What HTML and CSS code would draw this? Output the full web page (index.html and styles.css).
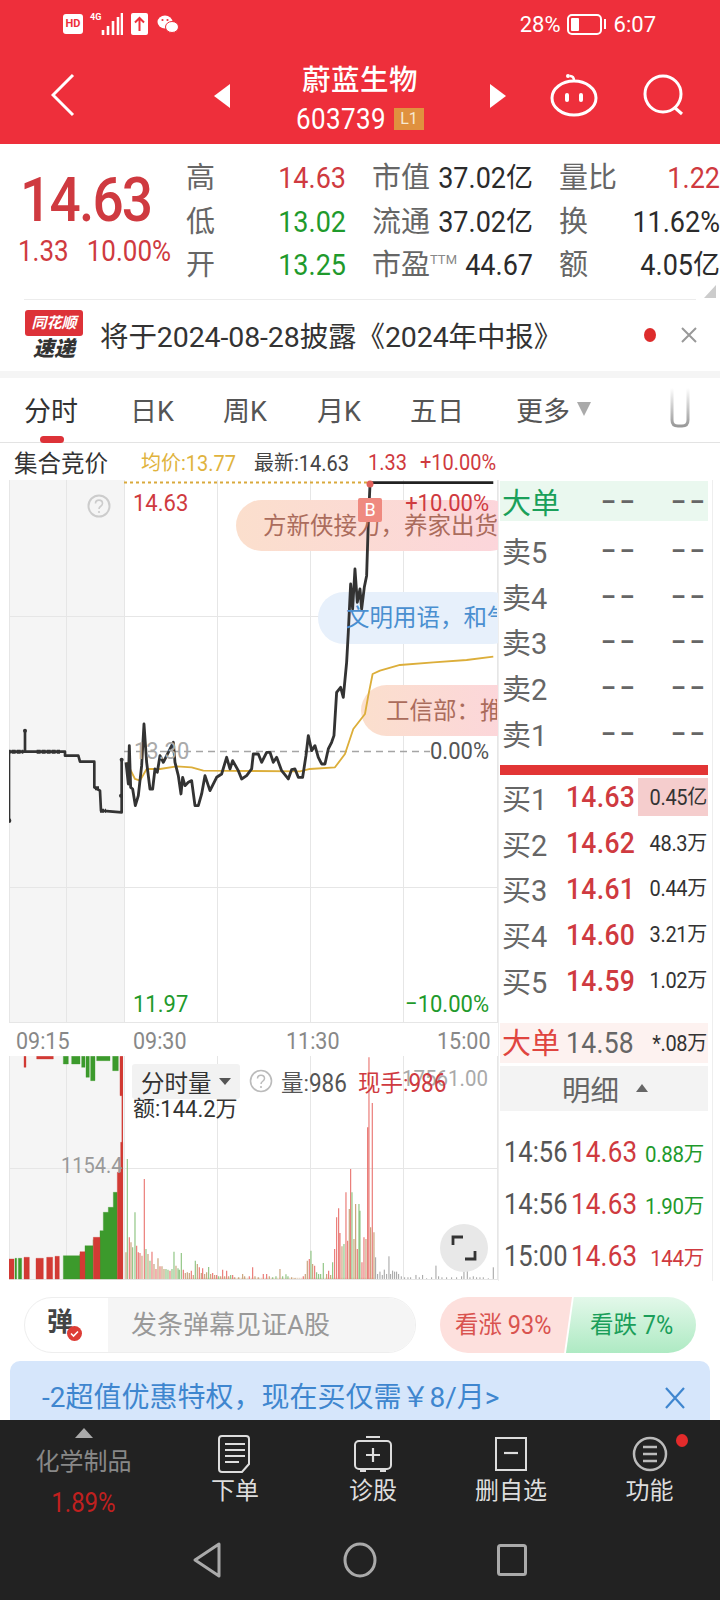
FILE: index.html
```html
<!DOCTYPE html>
<html lang="zh">
<head>
<meta charset="utf-8">
<title>蔚蓝生物</title>
<link rel="stylesheet" href="styles.css">
</head>
<body>
<div class="app">
  <header class="head">
    <div class="status">
      <span class="hd">HD</span>
      <span class="net">4G</span>
      <svg class="sig" width="22" height="24" viewBox="0 0 22 24"><path d="M2 23v-5M7 23v-9M12 23v-14M17 23v-18M21 23v-22" stroke="#fff" stroke-width="2.6" fill="none"/></svg>
      <svg class="up" width="17" height="22" viewBox="0 0 17 22"><rect width="17" height="22" rx="2" fill="#fff"/><path d="M8.500 18V5M4 9.500l4.500-4.500 4.500 4.500" stroke="#ee2f3b" stroke-width="2" fill="none"/></svg>
      <svg class="wx" width="22" height="20" viewBox="0 0 22 20"><ellipse cx="8" cy="8" rx="7.500" ry="6.500" fill="#fff"/><ellipse cx="15" cy="13" rx="6.500" ry="5.500" fill="#fff" stroke="#ee2f3b"/><circle cx="5.500" cy="6" r="1.100" fill="#ee2f3b"/><circle cx="10.500" cy="6" r="1.100" fill="#ee2f3b"/></svg>
      <span class="st-right">28%</span>
      <span class="batt"><i class="batt-fill"></i></span>
      <i class="batt-nib"></i>
      <span class="clock">6:07</span>
    </div>
    <div class="nav">
      <svg class="back" width="24" height="44" viewBox="0 0 24 44"><path d="M22 2 2 22l20 20" stroke="#fff" stroke-width="3" fill="none"/></svg>
      <i class="tri-left"></i>
      <div class="title">
        <div class="name">蔚蓝生物</div>
        <div class="code"><span class="n">603739</span><span class="lv">L1</span></div>
      </div>
      <i class="tri-right"></i>
      <svg class="robot" width="48" height="44" viewBox="0 0 48 44"><ellipse cx="24" cy="25" rx="22" ry="17" fill="none" stroke="#fff" stroke-width="3"/><path d="M24 8c0-3-1-5-4-5" fill="none" stroke="#fff" stroke-width="2.500"/><circle cx="18" cy="3" r="2" fill="#fff"/><rect x="15" y="20" width="4" height="9" rx="2" fill="#fff"/><rect x="29" y="20" width="4" height="9" rx="2" fill="#fff"/></svg>
      <svg class="search" width="42" height="42" viewBox="0 0 42 42"><circle cx="20" cy="20" r="18" fill="none" stroke="#fff" stroke-width="3"/><path d="M31 33l8 7" stroke="#fff" stroke-width="3"/></svg>
    </div>
  </header>

  <section class="quote">
    <div class="big">
      <div class="big-price"><span class="n">14.63</span></div>
      <div class="big-change"><span class="n">1.33</span><span class="n">10.00%</span></div>
    </div>
    <div class="stats">
      <div class="cell"><span class="lab">高</span><span class="n up-c">14.63</span></div>
      <div class="cell"><span class="lab">市值</span><span class="val"><span class="n">37.02</span>亿</span></div>
      <div class="cell"><span class="lab">量比</span><span class="n up-c">1.22</span></div>
      <div class="cell"><span class="lab">低</span><span class="n dn-c">13.02</span></div>
      <div class="cell"><span class="lab">流通</span><span class="val"><span class="n">37.02</span>亿</span></div>
      <div class="cell"><span class="lab">换</span><span class="val"><span class="n">11.62%</span></span></div>
      <div class="cell"><span class="lab">开</span><span class="n dn-c">13.25</span></div>
      <div class="cell"><span class="lab">市盈<sup class="ttm">TTM</sup></span><span class="val"><span class="n">44.67</span></span></div>
      <div class="cell"><span class="lab">额</span><span class="val"><span class="n">4.05</span>亿</span></div>
    </div>
    <i class="corner"></i>
  </section>

  <section class="news">
    <div class="logo"><span class="logo-flag">同花顺</span><span class="logo-sub">速递</span></div>
    <div class="news-text">将于2024-08-28披露《2024年中报》</div>
    <i class="news-dot"></i>
    <svg class="news-x" width="18" height="18" viewBox="0 0 18 18"><path d="M2 2l14 14M16 2 2 16" stroke="#999" stroke-width="2"/></svg>
  </section>

  <nav class="tabs">
    <span class="tab tab-on">分时</span>
    <span class="tab tab-2">日K</span>
    <span class="tab tab-3">周K</span>
    <span class="tab tab-4">月K</span>
    <span class="tab tab-5">五日</span>
    <span class="tab tab-6">更多</span>
    <i class="tab-tri"></i>
    <svg class="tab-u" width="22" height="40" viewBox="0 0 22 40"><defs><linearGradient id="u" x1="0" y1="0" x2="0" y2="1"><stop offset="0" stop-color="#fff"/><stop offset="1" stop-color="#999"/></linearGradient></defs><path d="M3 0v32q0 6 6 6h4q6 0 6-6V0" fill="none" stroke="url(#u)" stroke-width="3"/></svg>
  </nav>

  <div class="info">
    <span class="info-a">集合竞价</span>
    <span class="info-b">均价:<span class="n">13.77</span></span>
    <span class="info-c">最新:<span class="n">14.63</span></span>
    <span class="info-d n">1.33</span>
    <span class="info-e n">+10.00%</span>
  </div>

  <section class="market">
    <div class="charts">
      <div class="price-chart">
        <svg class="plot" width="489" height="543" viewBox="9 481 489 543">
          <rect x="9" y="481" width="115" height="543" fill="#f5f5f5"/>
          <path d="M9.500 481V1024M66.500 481V1024M124.500 481V1024M217.500 481V1024M310.500 481V1024M403.500 481V1024M497.500 481V1024M9 617.500H498M9 888.500H498M9 1023.500H498" stroke="#e6e6e6" stroke-width="1" fill="none"/>
          <rect x="236" y="501" width="280" height="51" rx="25.500" fill="url(#b1)"/>
          <rect x="318" y="593" width="200" height="52" rx="26" fill="#e7f0fb"/>
          <rect x="361" y="686" width="160" height="51" rx="25.500" fill="url(#b1)"/>
          <defs><linearGradient id="b1"><stop offset="0" stop-color="#fbdfcd"/><stop offset="1" stop-color="#fcd5dc"/></linearGradient></defs>
          <path d="M124 752.500H430" stroke="#a5a5a5" stroke-width="1.500" stroke-dasharray="7 5"/>
          <path d="M124 483.500H370" stroke="#d9a93c" stroke-width="1.800" stroke-dasharray="3 3"/>
          <g transform="translate(0 480) scale(.3333)" fill="none" stroke-linejoin="round">
            <path d="M380 850 405 900 420 905 440 870 480 870 530 862 575 865 610 875 900 877 930 870 1005 865 1035 825 1060 750 1095 705 1105 650 1118 585 1140 575 1200 558 1300 550 1400 543 1480 533" stroke="#dcae3a" stroke-width="5.500"/>
            <path d="M27 1025V818H75V755 818H195V830H235L240 848H283V925L300 935 303 995 365 1000V840" stroke="#333" stroke-width="8"/>
            <path d="M20 818H70M110 818H180M285 928H300M300 995H318" stroke="#333" stroke-width="12" stroke-dasharray="12 3"/>
            <circle cx="27" cy="1025" r="7" fill="#333"/>
            <circle cx="75" cy="755" r="6" fill="#333"/>
            <circle cx="365" cy="842" r="6" fill="#333"/>
            <circle cx="363" cy="950" r="6" fill="#333"/>
            <path d="M378 850 385 915 388 800 392 925 398 930 406 980 415 950 425 860 432 735 440 850 450 930 458 930 465 870 472 880 480 830 490 850 505 820 520 790 525 850 535 890 543 945 548 895 555 920 565 910 575 905 585 980 595 980 605 945 615 890 630 935 650 895 665 885 680 835 690 870 698 845 715 875 725 900 740 890 755 870 760 825 775 825 785 850 800 820 810 820 820 850 830 835 845 875 865 900 875 872 885 870 895 895 908 895 918 830 925 770 935 815 945 800 955 835 965 855 975 855 985 810 995 790 1002 770 1010 640 1022 625 1030 655 1040 550 1045 460 1052 315 1058 390 1065 270 1072 370 1080 330 1085 390 1093 325 1100 290 1105 130 1110 20" stroke="#333" stroke-width="8.500"/>
            <path d="M1110 11H1480" stroke="#222" stroke-width="8"/>
          </g>
          <circle cx="370" cy="485" r="3.500" fill="#e0605a"/>
        </svg>
        <svg class="q-main" width="24" height="24" viewBox="0 0 24 24"><circle cx="12" cy="12" r="10.500" fill="none" stroke="#ccc" stroke-width="2"/><path d="M8.500 9.500c0-4.500 7-4.500 7 0 0 3-3.500 2.500-3.500 5.500" fill="none" stroke="#ccc" stroke-width="1.600"/><circle cx="12" cy="18" r="1.100" fill="#ccc"/></svg>
        <span class="cl cl-tl n up-c">14.63</span>
        <span class="cl cl-tr n up-c">+10.00%</span>
        <span class="cl cl-bl n dn-c">11.97</span>
        <span class="cl cl-br n dn-c">−10.00%</span>
        <span class="cl cl-ml n">13.30</span>
        <span class="cl cl-mr n">0.00%</span>
        <div class="bub bub-1">方新侠接力，养家出货</div>
        <div class="bub bub-2">文明用语，和气</div>
        <div class="bub bub-3">工信部：推</div>
        <span class="mark">B</span>
      </div>
      <div class="times">
        <span class="n t1">09:15</span><span class="n t2">09:30</span><span class="n t3">11:30</span><span class="n t4">15:00</span>
      </div>
      <div class="vol-chart">
        <svg class="plot" width="489" height="224" viewBox="9 1057 489 224">
          <rect x="9" y="1057" width="115" height="224" fill="#f5f5f5"/>
          <path d="M9.500 1057V1281M66.500 1057V1281M124.500 1057V1281M217.500 1057V1281M310.500 1057V1281M403.500 1057V1281M497.500 1057V1281M9 1169.500H498M9 1056.500H498M9 1280.500H498" stroke="#e6e6e6" stroke-width="1" fill="none"/>
          <g transform="translate(0 1030) scale(.3333)" fill="none">
            <path stroke="#3c9a2c" stroke-width="1" fill="#3c9a2c" d="M45 750V688H50V750ZM55 750V688H65V750ZM190 750V680H240V675 750ZM255 750V650H280V632 750ZM300 750V605H310V550H325V535H340V490H352V750ZM190 82H205V105H190ZM215 82H240V105H215ZM245 82H255V115H245ZM258 82H268V145H258ZM272 82H285V155H272ZM290 82H330V95H290ZM338 82H355V125H338Z"/>
            <path stroke="#d23a34" stroke-width="1" fill="#d23a34" d="M27 750V690H42V750ZM72 750V685H88V750ZM108 750V688H130V750ZM140 750V685H158V750ZM165 750V682H178V750ZM240 750V668H255V750ZM280 750V625H300V750ZM352 750V430H362V340H368V750ZM360 82H367V200H360ZM72 82H78V115H72ZM110 82H160V90H110Z"/>
            <path d="M367 82V750" stroke="#d23a34" stroke-width="4"/>
            <g stroke-width="3.500">
              <path stroke="#c9a27a" stroke-width="2.500" stroke-dasharray="3 3" d="M560 748H1125"/>
              <path stroke="#ea7a76" d="M388 750V625M410 750V650M415 750V670M420 750V672M433 750V450M456 750V668M468 750V720M480 750V712M510 750V725M550 750V722M574 750V725M598 750V715M608 750V718M638 750V732M650 750V738M668 750V722M680 750V725M698 750V738M748 750V742M758 750V715M790 750V735M800 750V735M910 750V742M928 750V690M944 750V710M986 750V725M1004 750V660M1010 750V565M1016 750V538M1020 750V612M1038 750V490M1043 750V635M1052 750V420M1072 750V660M1086 750V700M1092 750V625M1103 750V295M1107 750V85M1117 750V222"/>
              <path stroke="#8fc583" d="M382 750V390M398 750V655M405 750V550M438 750V660M450 750V695M498 750V720M504 750V722M516 750V720M522 750V668M534 750V718M538 750V722M544 750V672M586 750V695M626 750V714M656 750V742M692 750V738M818 750V745M828 750V742M848 750V742M858 750V736M864 750V742M933 750V665M950 750V730M956 750V735M962 750V735M970 750V702M998 750V700M1032 750V645M1056 750V490M1077 750V525M1080 750V545"/>
              <path stroke="#c9a27a" d="M378 750V670M393 750V640M426 750V680M444 750V675M462 750V705M474 750V688M486 750V712M492 750V720M528 750V710M556 750V732M562 750V730M568 750V732M580 750V738M592 750V705M604 750V732M614 750V735M620 750V730M632 750V735M644 750V738M662 750V742M674 750V742M686 750V742M704 750V745M716 750V745M728 750V735M734 750V742M765 750V742M775 750V745M808 750V742M840 750V720M875 750V745M885 750V748M916 750V735M922 750V695M938 750V705M980 750V735M992 750V738M1026 750V652M1048 750V540M1062 750V630M1067 750V525M1098 750V630M1112 750V595M1122 750V610"/>
              <path stroke="#8d8d8d" stroke-width="2.500" d="M1127 750V685M1133 750V735M1140 750V728M1147 750V738M1153 750V722M1160 750V735M1167 750V682M1172 750V735M1178 750V725M1184 750V728M1190 750V728M1196 750V735M1204 750V742M1214 750V745M1224 750V745M1232 750V745M1248 750V738M1258 750V745M1268 750V738M1280 750V748M1295 750V745M1308 750V710M1316 750V742M1326 750V745M1340 750V745M1355 750V745M1370 750V745M1385 750V742M1392 750V725M1402 750V720M1410 750V745M1420 750V742M1430 750V745M1440 750V745M1450 750V745M1465 750V748M1480 750V715"/>
            </g>
          </g>
        </svg>
        <span class="vl vl-r n">17561.00</span>
        <span class="vl vl-max n">1154.4</span>
        <div class="vsel"><span>分时量</span><i class="vsel-tri"></i></div>
        <svg class="q-vol" width="24" height="24" viewBox="0 0 24 24"><circle cx="12" cy="12" r="10.500" fill="none" stroke="#bbb" stroke-width="1.600"/><path d="M8.500 9.500c0-4.500 7-4.500 7 0 0 3-3.500 2.500-3.500 5.500" fill="none" stroke="#bbb" stroke-width="1.500"/><circle cx="12" cy="18" r="1.100" fill="#bbb"/></svg>
        <span class="vl vl-q">量:<span class="n">986</span></span>
        <span class="vl vl-x">现手:<span class="n">986</span></span>
        <span class="vl vl-a">额:<span class="n">144.2</span>万</span>
        <div class="full"><svg width="26" height="26" viewBox="0 0 26 26"><path d="M12 2H2v8M14 24h10v-8" fill="none" stroke="#333" stroke-width="2.800"/></svg></div>
      </div>
    </div>

    <aside class="panel">
      <div class="row row-big-g"><span class="r-lab">大单</span><span class="dash">--</span><span class="dash">--</span></div>
      <div class="sells">
        <div class="row"><span class="r-lab">卖5</span><span class="dash">--</span><span class="dash">--</span></div>
        <div class="row"><span class="r-lab">卖4</span><span class="dash">--</span><span class="dash">--</span></div>
        <div class="row"><span class="r-lab">卖3</span><span class="dash">--</span><span class="dash">--</span></div>
        <div class="row"><span class="r-lab">卖2</span><span class="dash">--</span><span class="dash">--</span></div>
        <div class="row"><span class="r-lab">卖1</span><span class="dash">--</span><span class="dash">--</span></div>
      </div>
      <div class="bar"></div>
      <div class="buys">
        <div class="row"><span class="r-lab">买1</span><span class="r-price n">14.63</span><span class="r-qty r-hi"><span class="n">0.45</span>亿</span></div>
        <div class="row"><span class="r-lab">买2</span><span class="r-price n">14.62</span><span class="r-qty"><span class="n">48.3</span>万</span></div>
        <div class="row"><span class="r-lab">买3</span><span class="r-price n">14.61</span><span class="r-qty"><span class="n">0.44</span>万</span></div>
        <div class="row"><span class="r-lab">买4</span><span class="r-price n">14.60</span><span class="r-qty"><span class="n">3.21</span>万</span></div>
        <div class="row"><span class="r-lab">买5</span><span class="r-price n">14.59</span><span class="r-qty"><span class="n">1.02</span>万</span></div>
      </div>
      <div class="row row-big-r"><span class="r-lab">大单</span><span class="r-price r-gray n">14.58</span><span class="r-qty"><span class="n">*.08</span>万</span></div>
      <div class="detail-h"><span>明细</span><i class="detail-tri"></i></div>
      <div class="details">
        <div class="row"><span class="d-time n">14:56</span><span class="d-price n">14.63</span><span class="d-qty dn-c"><span class="n">0.88</span>万</span></div>
        <div class="row"><span class="d-time n">14:56</span><span class="d-price n">14.63</span><span class="d-qty dn-c"><span class="n">1.90</span>万</span></div>
        <div class="row"><span class="d-time n">15:00</span><span class="d-price n">14.63</span><span class="d-qty up-c"><span class="n">144</span>万</span></div>
      </div>
    </aside>
  </section>

  <section class="compose">
    <div class="pill">
      <div class="pill-l"><span class="dan">弹</span><svg class="check" width="15" height="15" viewBox="0 0 15 15"><circle cx="7.500" cy="7.500" r="7.500" fill="#dd3d36"/><path d="M4 7.500l2.500 2.500 4.500-4.500" fill="none" stroke="#fff" stroke-width="1.600"/></svg></div>
      <div class="pill-r">发条弹幕见证A股</div>
    </div>
    <div class="votes">
      <div class="vote-up">看涨 <span class="n">93%</span></div>
      <div class="vote-dn">看跌 <span class="n">7%</span></div>
    </div>
  </section>

  <section class="banner">
    <span class="banner-text">-2超值优惠特权，现在买仅需￥8/月&gt;</span>
    <svg class="banner-x" width="22" height="22" viewBox="0 0 22 22"><path d="M2 1l18 20M20 1 2 21" stroke="#3f86cf" stroke-width="2.200"/></svg>
  </section>

  <footer class="foot">
    <div class="tools">
      <div class="tool tool-sector">
        <i class="sector-tri"></i>
        <span class="sector-name">化学制品</span>
        <span class="sector-pct n">1.89%</span>
      </div>
      <div class="tool">
        <svg class="ticon" width="38" height="38" viewBox="0 0 38 38"><path d="M6 1h24q3 0 3 3v25l-7 8H6q-3 0-3-3V4q0-3 3-3Z" fill="none" stroke="#ddd" stroke-width="2"/><path d="M9 9h20M9 15h20M9 21h20M9 27h14" stroke="#ddd" stroke-width="2"/></svg>
        <span>下单</span>
      </div>
      <div class="tool">
        <svg class="ticon" width="40" height="38" viewBox="0 0 40 38"><rect x="2" y="6" width="36" height="28" rx="4" fill="none" stroke="#ddd" stroke-width="2"/><path d="M13 2h14M7 36h6M27 36h6M20 13v14M13 20h14" stroke="#ddd" stroke-width="2.200"/></svg>
        <span>诊股</span>
      </div>
      <div class="tool">
        <svg class="ticon" width="34" height="38" viewBox="0 0 34 38"><rect x="2" y="3" width="30" height="32" fill="none" stroke="#ddd" stroke-width="2"/><path d="M10 18h14" stroke="#ddd" stroke-width="2.200"/></svg>
        <span>删自选</span>
      </div>
      <div class="tool">
        <svg class="ticon" width="36" height="38" viewBox="0 0 36 38"><circle cx="18" cy="19" r="16" fill="none" stroke="#bbb" stroke-width="2.500"/><path d="M11 12h14M11 19h14M11 26h14" stroke="#bbb" stroke-width="2.500"/></svg>
        <i class="tool-dot"></i>
        <span>功能</span>
      </div>
    </div>
    <div class="sysnav">
      <svg width="30" height="36" viewBox="0 0 30 36"><path d="M27 2v32L3 18Z" fill="none" stroke="#aaa" stroke-width="3" stroke-linejoin="round"/></svg>
      <svg width="34" height="36" viewBox="0 0 34 36"><ellipse cx="17" cy="18" rx="15" ry="16" fill="none" stroke="#aaa" stroke-width="3"/></svg>
      <svg width="30" height="32" viewBox="0 0 30 32"><rect x="1.500" y="1.500" width="27" height="29" rx="2" fill="none" stroke="#aaa" stroke-width="3"/></svg>
    </div>
  </footer>
</div>
</body>
</html>
```
FILE: styles.css
```css
* { box-sizing: border-box; }
html, body { margin: 0; padding: 0; background: #fff; }
body { font-family: Roboto, "Noto Sans CJK SC", "Noto Sans", sans-serif; color: #333; }
i { display: block; font-style: normal; }
.app { width: 720px; height: 1600px; overflow: hidden; display: flex; flex-direction: column; position: relative; }
.n { display: inline-block; transform: scaleY(1.12); }
.up-c { color: #cf3a40; }
.dn-c { color: #1f9a2c; }

/* header */
.head { height: 144px; background: #ee2f3b; color: #fff; flex: none; }
.status { height: 48px; display: flex; align-items: center; padding-left: 63px; }
.hd { width: 20px; height: 20px; background: #fff; color: #ee2f3b; border-radius: 3px; font-size: 11px; font-weight: 700; text-align: center; line-height: 20px; }
.net { font-size: 9px; font-weight: 700; width: 14px; margin-left: 7px; align-self: flex-start; margin-top: 12px; }
.sig { margin-left: -3px; }
.up { margin-left: 8px; }
.wx { margin-left: 9px; }
.st-right { margin-left: auto; font-size: 22px; }
.batt { width: 35px; height: 21px; border: 2px solid #fff; border-radius: 5px; margin-left: 6px; padding: 2px; display: block; }
.batt-fill { width: 8px; height: 100%; background: #fff; border-radius: 1px; }
.batt-nib { width: 2px; height: 10px; background: #fff; margin-left: 2px; }
.clock { font-size: 22px; margin-left: 8px; margin-right: 64px; }
.nav { height: 96px; position: relative; display: flex; align-items: center; }
.back { position: absolute; left: 51px; top: 25px; }
.tri-left, .tri-right { position: absolute; top: 36px; width: 0; height: 0; border-top: 12px solid transparent; border-bottom: 12px solid transparent; }
.tri-left { left: 214px; border-right: 16px solid #fff; }
.tri-right { left: 490px; border-left: 16px solid #fff; }
.title { width: 100%; text-align: center; margin-top: 4px; }
.name { font-size: 28.500px; font-weight: 500; line-height: 38px; letter-spacing: .5px; }
.code { display: flex; justify-content: center; align-items: center; gap: 8px; font-size: 26px; line-height: 30px; margin-top: 4px; letter-spacing: .4px; }
.lv { width: 30px; height: 22px; background: #e0913f; color: #f7e9d2; font-size: 16px; line-height: 22px; letter-spacing: 0; text-align: center; }
.robot { position: absolute; left: 550px; top: 25px; }
.search { position: absolute; left: 643px; top: 26px; }

/* quote */
.quote { height: 155px; flex: none; display: flex; position: relative; }
.big { width: 187px; padding-left: 18px; color: #cf3a40; }
.big-price { font-size: 55px; font-weight: 500; line-height: 50px; margin-top: 31px; padding-left: 2px; letter-spacing: -1.800px; }
.big-change { font-size: 26px; line-height: 30px; margin-top: 11px; display: flex; gap: 18px; letter-spacing: 0; }
.stats { width: 534px; padding-top: 13px; display: grid; grid-template-columns: 160px 161px 161px; column-gap: 26px; grid-auto-rows: 43.500px; align-items: center; font-size: 27px; color: #222; }
.cell { display: flex; justify-content: space-between; align-items: center; line-height: 43px; white-space: nowrap; }
.lab { color: #666; font-size: 29px; }
.val { color: #2b2b2b; }
.ttm { font-size: 13px; line-height: 0; vertical-align: 11px; color: #888; }
.corner { position: absolute; right: 4px; top: 141px; width: 0; height: 0; border-left: 12px solid transparent; border-bottom: 13px solid #ccc; }

/* news */
.news { height: 72px; flex: none; margin: 0 24px; border-top: 1px solid #ececec; display: flex; align-items: center; position: relative; }
.logo { width: 60px; height: 52px; display: flex; flex-direction: column; align-items: center; }
.logo-flag { width: 58px; height: 26px; background: #dd3238; color: #fff; font-size: 15px; font-weight: 700; font-style: italic; line-height: 26px; text-align: center; border-radius: 3px; }
.logo-sub { font-size: 21px; font-weight: 900; font-style: italic; line-height: 26px; color: #333; }
.news-text { margin-left: 16px; font-size: 28.500px; letter-spacing: -.1px; color: #333; margin-top: -3px; white-space: nowrap; }
.news-dot { position: absolute; left: 620px; top: 28px; width: 12px; height: 14px; border-radius: 50%; background: #dd2c2c; }
.news-x { position: absolute; left: 656px; top: 26px; }

/* tabs */
.tabs { height: 72px; flex: none; border-top: 7px solid #f5f5f5; border-bottom: 1px solid #e3e3e3; position: relative; font-size: 27px; color: #555; line-height: 68px; }
.tab { position: absolute; top: 0; }
.tab-on { left: 24px; color: #333; }
.tab-on::after { content: ""; position: absolute; left: 16px; top: 58px; width: 24px; height: 7px; background: #dd3238; border-radius: 4px; }
.tab-2 { left: 130px; }
.tab-3 { left: 223px; }
.tab-4 { left: 317px; }
.tab-5 { left: 410px; }
.tab-6 { left: 516px; }
.tab-tri { position: absolute; left: 577px; top: 24px; width: 0; height: 0; border-left: 7px solid transparent; border-right: 7px solid transparent; border-top: 14px solid #aaa; }
.tab-u { position: absolute; left: 669px; top: 10px; }

/* info */
.info { height: 37px; flex: none; display: flex; align-items: center; font-size: 20px; white-space: nowrap; }
.info-a { font-size: 23.500px; margin-left: 14px; width: 127px; color: #333; }
.info-b { color: #e0b33d; width: 113px; }
.info-c { color: #444; width: 114px; }
.info-d { color: #cf3a40; width: 52px; }
.info-e { color: #cf3a40; }

/* market */
.market { height: 801px; flex: none; padding-left: 9px; display: flex; }
.charts { width: 489px; display: flex; flex-direction: column; }
.price-chart { position: relative; height: 543px; flex: none; }
.vol-chart { position: relative; height: 224px; flex: none; }
.plot { display: block; position: absolute; left: 0; top: 0; }
.q-main { position: absolute; left: 78px; top: 14px; }
.cl { position: absolute; font-size: 22px; line-height: 26px; white-space: nowrap; }
.cl-tl { left: 124px; top: 10px; }
.cl-tr { right: 9px; top: 10px; }
.cl-bl { left: 124px; top: 511px; }
.cl-br { right: 9px; top: 511px; }
.cl-ml { left: 125px; top: 258px; color: #aaa; }
.cl-mr { right: 9px; top: 258px; color: #555; }
.bub { position: absolute; font-size: 23.500px; line-height: 32px; white-space: nowrap; overflow: hidden; }
.bub-1 { left: 254px; top: 30px; width: 234px; color: #ab6c5c; }
.bub-2 { left: 337px; top: 122px; width: 151px; color: #4a8fd0; }
.bub-3 { left: 377px; top: 215px; width: 111px; color: #ab6c5c; }
.mark { position: absolute; left: 349px; top: 18px; width: 24px; height: 24px; background: #ef8a80; color: #fff; font-size: 18px; text-align: center; line-height: 24px; border-radius: 2px; }
.times { height: 33px; flex: none; position: relative; font-size: 21.500px; color: #888; line-height: 36px; }
.times .n { position: absolute; top: 0; }
.t1 { left: 7px; }
.t2 { left: 124px; }
.t3 { left: 277px; }
.t4 { left: 428px; }
.vl { position: absolute; font-size: 22.500px; line-height: 28px; white-space: nowrap; }
.vl-r { right: 10px; top: 8px; color: #aaa; font-size: 20.500px; }
.vl-max { left: 52px; top: 95px; color: #999; font-size: 20px; }
.vl-q { left: 272px; top: 13px; color: #555; }
.vl-x { left: 349px; top: 13px; color: #cf3a40; }
.vl-a { left: 124px; top: 39px; color: #333; font-size: 22px; }
.vsel { position: absolute; left: 123px; top: 8px; width: 108px; height: 35px; background: #f2f2f2; border-radius: 3px; display: flex; align-items: center; padding-left: 9px; font-size: 23.500px; color: #333; }
.vsel-tri { margin-left: 7px; width: 0; height: 0; border-left: 6px solid transparent; border-right: 6px solid transparent; border-top: 7px solid #555; }
.q-vol { position: absolute; left: 240px; top: 13px; }
.full { position: absolute; left: 431px; top: 168px; width: 48px; height: 48px; border-radius: 50%; background: #e8e8e8; display: flex; align-items: center; justify-content: center; }

/* order book */
.panel { width: 215px; flex: none; border-left: 1px solid #eee; border-right: 1px solid #eee; padding: 1px 4px 0 1px; font-size: 27px; }
.row { display: flex; align-items: center; position: relative; white-space: nowrap; height: 45.800px; }
.r-lab { color: #666; font-size: 29px; width: 66px; flex: none; padding-left: 2px; }
.dash { color: #666; font-weight: 700; font-size: 26px; letter-spacing: 1.500px; width: 73px; text-align: right; transform: scaleX(1.6); transform-origin: 100% 50%; }
.dash + .dash { width: 71px; }
.row-big-g { height: 40px; background: #eaf8ef; }
.row-big-g .r-lab { color: #1aa05a; }
.sells { margin-top: 6px; }
.bar { height: 10px; background: #e23535; margin-top: 9px; }
.buys { margin-top: -1px; }
.r-price { color: #cf3a40; font-weight: 500; font-size: 26.500px; width: 71px; flex: none; letter-spacing: .3px; }
.r-gray { color: #666; font-weight: 400; }
.r-qty { color: #333; font-size: 20px; margin-left: auto; height: 38px; line-height: 38px; letter-spacing: -.3px; white-space: nowrap; padding-right: 1px; }
.r-hi { background: #f5cdcd; width: 70px; text-align: right; }
.row-big-r { height: 40px; margin-top: 20px; background: #fdf2f0; }
.row-big-r .r-lab { color: #e0453f; padding-bottom: 4px; }
.detail-h { height: 45px; margin-top: 3px; background: #f3f3f3; display: flex; align-items: center; padding-left: 62px; color: #666; font-size: 28.500px; }
.detail-tri { margin-left: 17px; width: 0; height: 0; border-left: 6px solid transparent; border-right: 6px solid transparent; border-bottom: 8px solid #666; }
.details { margin-top: 15px; }
.details .row { height: 52px; }
.d-time { color: #555; font-size: 25.500px; width: 71px; flex: none; padding-left: 4px; }
.d-price { color: #cf3a40; font-size: 26px; width: 70px; flex: none; letter-spacing: .2px; }
.d-qty { font-size: 20.500px; margin-left: auto; padding-right: 4px; letter-spacing: -.3px; }

/* composer */
.compose { height: 80px; flex: none; padding: 16px 24px 0; display: flex; }
.pill { width: 392px; height: 56px; border: 1px solid #eee; border-radius: 28px; display: flex; overflow: hidden; }
.pill-l { width: 83px; flex: none; position: relative; font-size: 26px; font-weight: 700; color: #444; padding: 3px 0 0 22px; }
.check { position: absolute; left: 42px; top: 28px; }
.pill-r { flex: 1; background: #f5f5f5; padding-left: 23px; font-size: 26px; line-height: 54px; color: #999; white-space: nowrap; }
.votes { margin-left: 24px; width: 256px; height: 56px; display: flex; font-size: 23.500px; line-height: 56px; }
.vote-up { width: 132px; background: #fde0dd; color: #d9534f; padding-left: 15px; border-radius: 28px 0 0 28px; clip-path: polygon(0 0, 100% 0, 94% 100%, 0 100%); white-space: nowrap; }
.vote-dn { width: 130px; margin-left: -6px; background: linear-gradient(#e3f8ea, #aeeac3); color: #1a9e5a; padding-left: 24px; border-radius: 0 28px 28px 0; clip-path: polygon(6% 0, 100% 0, 100% 100%, 0 100%); white-space: nowrap; }

/* banner */
.banner { height: 59px; flex: none; margin: 0 10px; background: #d6e6fb; border-radius: 10px 10px 0 0; position: relative; padding: 17px 0 0 32px; font-size: 28px; line-height: 40px; color: #3f86cf; white-space: nowrap; letter-spacing: 0; }
.banner-x { position: absolute; left: 654px; top: 26px; }

/* foot */
.foot { flex: 1; background: #222; color: #ddd; }
.tools { height: 102px; display: flex; }
.tool { display: flex; flex-direction: column; align-items: center; padding-top: 15px; font-size: 24px; line-height: 30px; position: relative; }
.tool:nth-child(1) { width: 167px; padding-top: 8px; }
.tool:nth-child(2) { width: 136px; }
.tool:nth-child(3) { width: 140px; }
.tool:nth-child(4) { width: 136px; }
.tool:nth-child(5) { width: 141px; }
.ticon { margin-bottom: 3px; }
.sector-tri { width: 0; height: 0; border-left: 9px solid transparent; border-right: 9px solid transparent; border-bottom: 10px solid #aaa; }
.sector-name { color: #888; font-size: 24px; margin-top: 7px; line-height: 34px; }
.sector-pct { color: #c0201f; font-size: 24px; line-height: 32px; margin-top: 8px; }
.tool-dot { position: absolute; left: 97px; top: 14px; width: 12px; height: 13px; border-radius: 50%; background: #e32b2b; }
.sysnav { height: 76px; display: flex; align-items: center; padding-left: 192px; }
.sysnav svg:nth-child(2) { margin-left: 121px; }
.sysnav svg:nth-child(3) { margin-left: 120px; }
```
